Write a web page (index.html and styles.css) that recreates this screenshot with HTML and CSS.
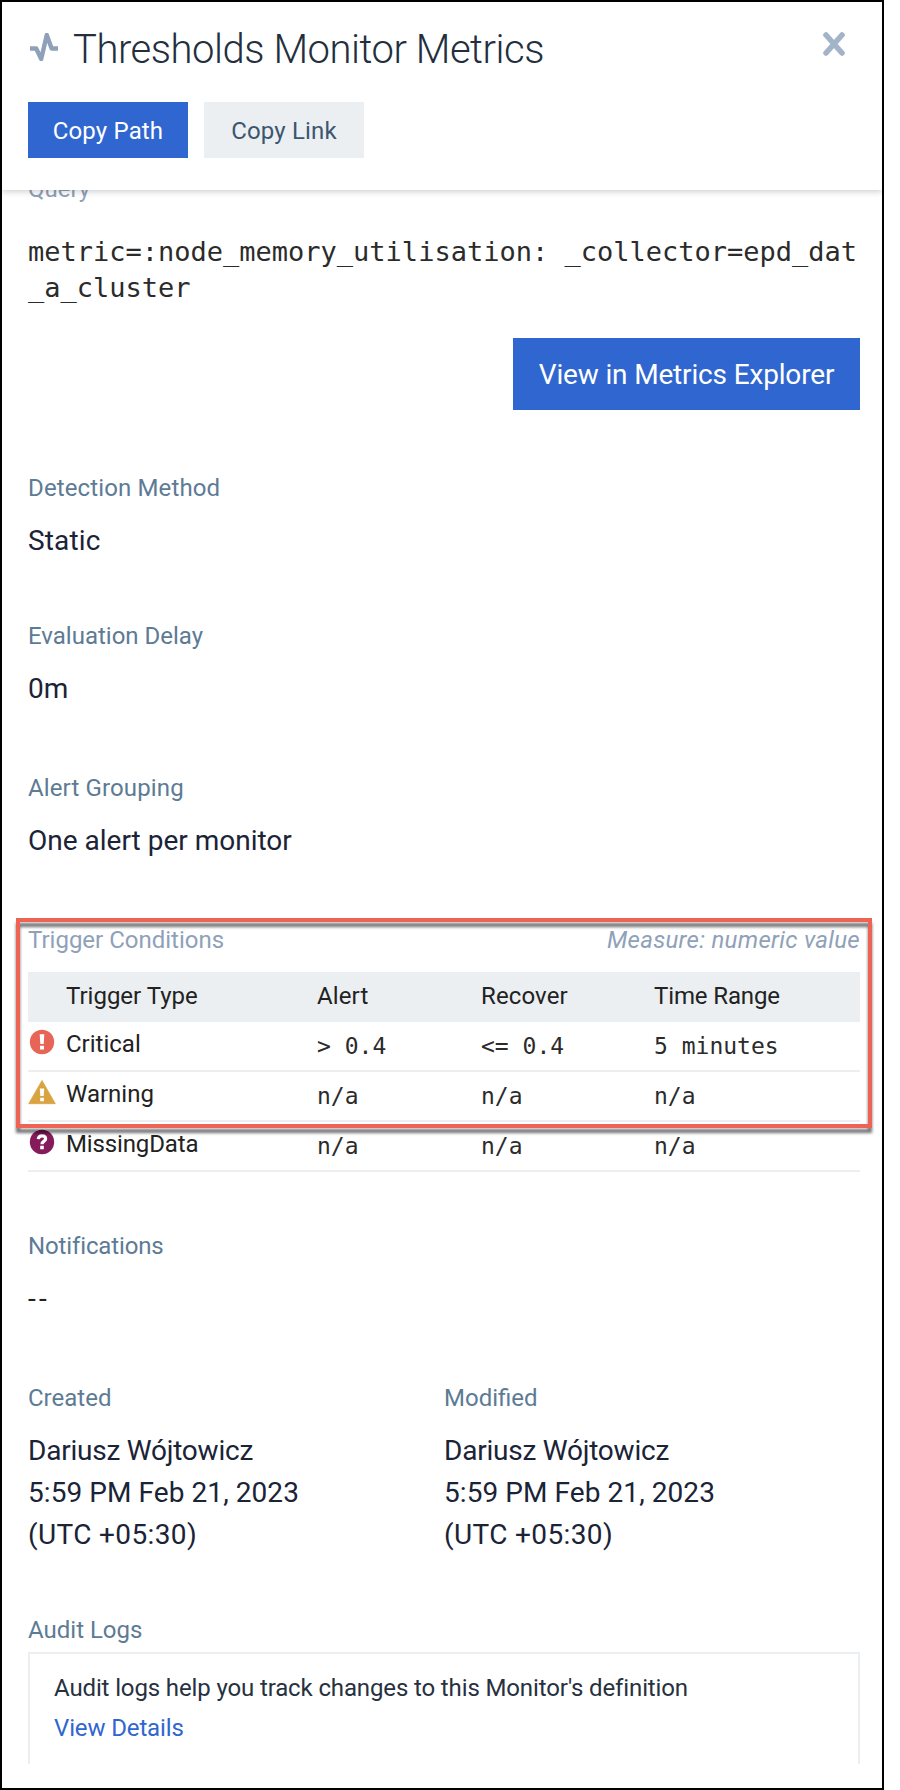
FILE: index.html
```html
<!DOCTYPE html>
<html lang="en">
<head>
<meta charset="utf-8">
<title>Thresholds Monitor Metrics</title>
<link rel="stylesheet" href="styles.css">
</head>
<body>
<main class="panel">
  <header class="header">
    <div class="title-row">
      <svg class="pulse" viewBox="0 0 28 28"><path d="M0 15.500H6.200L11.200 26L16.800 2L21.600 15.500H28" fill="none" stroke="#8fa1b8" stroke-width="4.400" stroke-linejoin="round"/></svg>
      <h1 class="title">Thresholds Monitor Metrics</h1>
      <svg class="close" viewBox="0 0 22 24"><path d="M3 3L19 21M19 3L3 21" stroke="#a3b4c8" stroke-width="5.600" stroke-linecap="round"/></svg>
    </div>
    <div class="actions">
      <button class="btn primary">Copy Path</button>
      <button class="btn">Copy Link</button>
    </div>
  </header>
  <div class="content">
    <section class="query">
      <div class="label muted">Query</div>
      <div class="code">metric=:node_memory_utilisation: _collector=epd_dat<br>_a_cluster</div>
      <button class="explore">View in Metrics Explorer</button>
    </section>
    <section class="field detection"><div class="label wide">Detection Method</div><div class="value wide">Static</div></section>
    <section class="field evaluation"><div class="label">Evaluation Delay</div><div class="value">0m</div></section>
    <section class="field grouping"><div class="label wide">Alert Grouping</div><div class="value">One alert per monitor</div></section>
    <section class="triggers">
      <div class="triggers-head label muted"><span>Trigger Conditions</span><em class="measure">Measure: numeric value</em></div>
      <div class="table">
        <div class="row head"><span></span><span>Trigger Type</span><span class="wide">Alert</span><span class="wide">Recover</span><span class="narrow">Time Range</span></div>
        <div class="row"><svg class="icon" viewBox="0 0 28 28"><circle cx="14" cy="14" r="12.200" fill="#e66557"/><path d="M11.700 6.300h4.600l-.6 9.700h-3.400zM12 17.800h4v3.800h-4z" fill="#fff"/></svg><span>Critical</span><code>&gt; 0.4</code><code>&lt;= 0.4</code><code>5 minutes</code></div>
        <div class="row"><svg class="icon" viewBox="0 0 28 28"><path d="M14 2.500L27.300 25.700H.7z" fill="#daa342" stroke="#daa342" stroke-width=".8" stroke-linejoin="round"/><path d="M11.800 10.500h4.400l-.5 7.500h-3.400zM12.200 19.800h3.700v3.400h-3.700z" fill="#fff"/></svg><span>Warning</span><code>n/a</code><code>n/a</code><code>n/a</code></div>
        <div class="row"><svg class="icon" viewBox="0 0 28 28"><circle cx="14" cy="14" r="12.200" fill="#861b5c"/><path d="M10.300 11.200C10.500 8.800 12 7.900 14 7.900s3.600 1.100 3.600 3c0 2.300-3.600 2.300-3.600 5.300" fill="none" stroke="#fff" stroke-width="3.200"/><path d="M12.200 17.800h3.600v3.400h-3.600z" fill="#fff"/></svg><span class="narrow">MissingData</span><code>n/a</code><code>n/a</code><code>n/a</code></div>
      </div>
      <div class="highlight"></div>
    </section>
    <section class="field notifications"><div class="label narrow">Notifications</div><div class="value dashes">--</div></section>
    <div class="history">
      <section class="field"><div class="label">Created</div><div class="value"><span class="name">Dariusz Wójtowicz</span><br><span class="time">5:59 PM Feb 21, 2023</span><br><span class="zone">(UTC +05:30)</span></div></section>
      <section class="field"><div class="label">Modified</div><div class="value"><span class="name">Dariusz Wójtowicz</span><br><span class="time">5:59 PM Feb 21, 2023</span><br><span class="zone">(UTC +05:30)</span></div></section>
    </div>
    <section class="audit">
      <div class="label">Audit Logs</div>
      <div class="audit-box narrow"><div>Audit logs help you track changes to this Monitor's definition</div><a class="link">View Details</a></div>
    </section>
  </div>
</main>
</body>
</html>
```
FILE: styles.css
```css
* { box-sizing: border-box; }
body { margin: 0; background: #fff; font-family: Roboto, "Liberation Sans", sans-serif; font-size: 24px; line-height: 32px; }
.panel { width: 884px; height: 1790px; border: 2px solid #000; background: #fff; overflow: hidden; }
.header { position: relative; z-index: 1; height: 188px; padding: 26px 26px 0; background: #fff; box-shadow: 0 2px 6px rgba(0,0,0,.18); }
.title-row { display: flex; height: 42px; }
.pulse { width: 28px; height: 28px; margin: 5px 15px 0 2px; }
.title { margin: 0; padding-top: 1px; font-size: 40px; line-height: 42px; font-weight: 300; letter-spacing: -.47px; color: #232f3e; flex: 1; white-space: nowrap; }
.close { width: 22px; height: 24px; margin: 4px 11px 0 0; }
.actions { display: flex; gap: 16px; margin-top: 32px; }
.btn, .explore { border: 0; padding: 2px 0 0; font: inherit; cursor: pointer; }
.btn { width: 160px; height: 56px; background: #ebeff2; color: #3c566e; letter-spacing: .15px; }
.primary { background: #3066cf; color: #fff; }
.content { height: 1574px; padding: 0 22px 0 26px; overflow: hidden; }
.label { height: 32px; color: #5d7b95; white-space: nowrap; }
.muted { color: #8fa1b9; }
.wide { letter-spacing: .13px; }
.narrow { letter-spacing: -.13px; }
.value { margin-top: 16px; margin-bottom: -1px; font-size: 28px; line-height: 42px; color: #1b2337; }
.dashes { color: #222; letter-spacing: 3.2px; }
.name { letter-spacing: -.23px; }
.time { letter-spacing: .07px; }
.zone { letter-spacing: .37px; }
.query { margin-top: -17px; display: flex; flex-direction: column; }
.code { margin-top: 29px; font: 27px/36px "DejaVu Sans Mono", monospace; color: #2b2b2b; white-space: nowrap; }
.explore { align-self: flex-end; margin-top: 32px; width: 347px; height: 72px; background: #3066cf; color: #fff; font-size: 28px; letter-spacing: -.16px; }
.detection { margin-top: 62px; }
.evaluation { margin-top: 59px; }
.grouping { margin-top: 63px; }
.triggers { position: relative; margin-top: 63px; }
.triggers-head { display: flex; justify-content: space-between; }
.measure { letter-spacing: .3px; }
.table { margin-top: 16px; color: #222; }
.row { display: grid; grid-template-columns: 38px 251px 164px 173px 1fr; height: 50px; border-bottom: 2px solid #ebeff2; line-height: 44px; }
.row code { font: 23px/48px "DejaVu Sans Mono", monospace; color: #2b2b2b; }
.head { background: #ebeff2; line-height: 48px; }
.icon { width: 28px; height: 28px; margin-top: 6px; }
.highlight { position: absolute; left: -12px; top: -6px; width: 856px; height: 210px; border: 4px solid #ee6353; filter: drop-shadow(0 5px 1.5px rgba(0,0,0,.55)); }
.notifications { margin-top: 58px; }
.history { display: grid; grid-template-columns: 1fr 1fr; margin-top: 63px; }
.audit { margin-top: 59px; }
.audit-box { margin-top: 6px; height: 112px; padding: 14px 24px 0; border: 2px solid #ebeff2; border-bottom: 0; color: #27313f; line-height: 40px; }
.link { color: #3066cf; }
```
